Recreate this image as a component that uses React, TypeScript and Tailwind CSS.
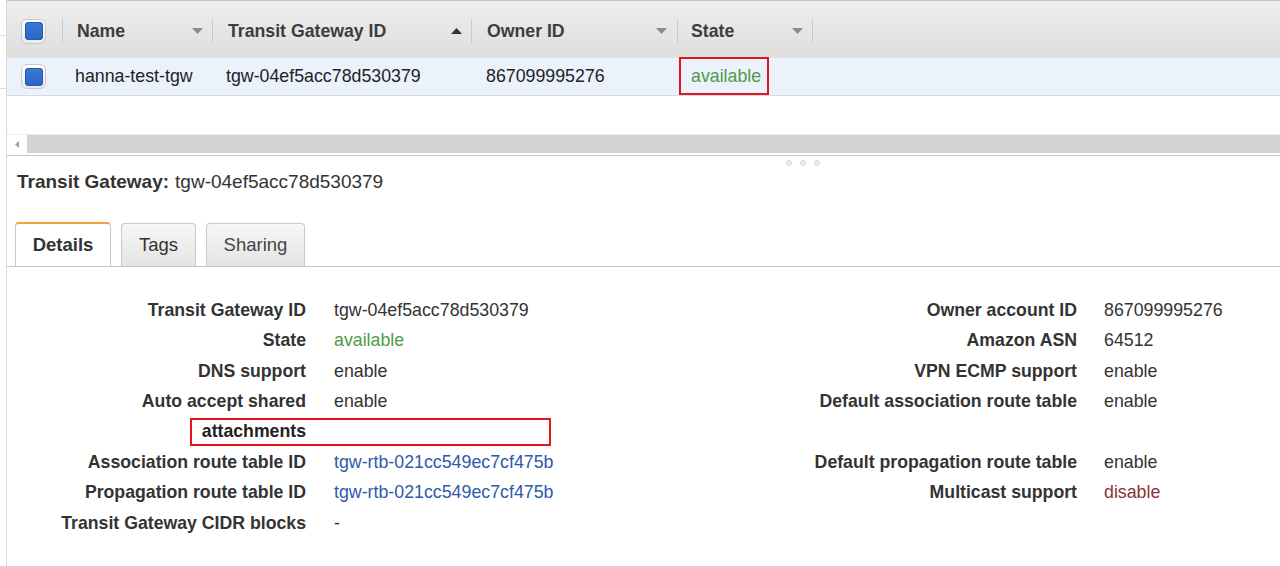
import React from 'react';

const DownArrow = () => (
  <svg width="11" height="6" viewBox="0 0 11 6" className="shrink-0">
    <path d="M0 0 L11 0 L5.5 6 Z" fill="#8c8c8c" />
  </svg>
);

const UpArrow = () => (
  <svg width="11" height="6" viewBox="0 0 11 6" className="shrink-0">
    <path d="M0 6 L11 6 L5.5 0 Z" fill="#333" />
  </svg>
);

function Checkbox() {
  return (
    <div className="w-[25px] h-[25px] rounded-[6px] border border-[#c9c9c9] bg-linear-to-b from-white to-[#ebebeb] flex items-center justify-center">
      <div className="w-[18px] h-[18px] rounded-[4px] bg-linear-to-b from-[#3a7ad8] to-[#2b63c3] shadow-[inset_0_0_0_1px_#2559b0]" />
    </div>
  );
}

const Sep = () => <div className="w-px h-[24px] bg-[#c9c9c9] shrink-0" />;

type Row = { label: string; value: string; tone?: 'green' | 'link' | 'red' } | null;

const leftRows: Row[] = [
  { label: 'Transit Gateway ID', value: 'tgw-04ef5acc78d530379' },
  { label: 'State', value: 'available', tone: 'green' },
  { label: 'DNS support', value: 'enable' },
  { label: 'Auto accept shared', value: 'enable' },
  null,
  { label: 'Association route table ID', value: 'tgw-rtb-021cc549ec7cf475b', tone: 'link' },
  { label: 'Propagation route table ID', value: 'tgw-rtb-021cc549ec7cf475b', tone: 'link' },
  { label: 'Transit Gateway CIDR blocks', value: '-' },
];

const rightRows: Row[] = [
  { label: 'Owner account ID', value: '867099995276' },
  { label: 'Amazon ASN', value: '64512' },
  { label: 'VPN ECMP support', value: 'enable' },
  { label: 'Default association route table', value: 'enable' },
  null,
  { label: 'Default propagation route table', value: 'enable' },
  { label: 'Multicast support', value: 'disable', tone: 'red' },
];

const toneClass = (tone?: string) =>
  tone === 'green' ? 'text-[#529b44]' : tone === 'link' ? 'text-[#2f59ab]' : tone === 'red' ? 'text-[#883333]' : 'text-[#333]';

export default function App() {
  return (
    <div className="w-[1280px] h-[566px] bg-white flex overflow-hidden font-['Liberation_Sans',Arial,sans-serif] text-[#333]">
      {/* left strip */}
      <div className="w-[6px] shrink-0 flex flex-col">
        <div className="h-[35px]" />
        <div className="h-px bg-[#dadada]" />
        <div className="h-[52px]" />
        <div className="h-px bg-[#dadada]" />
      </div>

      <div className="flex-1 border-l border-[#d9d9d9] flex flex-col">
        {/* table header */}
        <div className="h-px bg-[#c4c4c4]" />
        <div className="h-[57px] pt-[3px] flex items-center bg-linear-to-b from-[#eeeeee] to-[#dedede] text-[17.7px] font-bold text-[#3d3d3d]">
          <div className="w-[55px] pl-[14px] flex items-center">
            <Checkbox />
          </div>
          <Sep />
          <div className="w-[149px] pl-[14px] pr-[9px] flex items-center justify-between">
            <span>Name</span>
            <DownArrow />
          </div>
          <Sep />
          <div className="w-[258px] pl-[15px] pr-[9px] flex items-center justify-between">
            <span>Transit Gateway ID</span>
            <UpArrow />
          </div>
          <Sep />
          <div className="w-[205px] pl-[15px] pr-[10px] flex items-center justify-between">
            <span>Owner ID</span>
            <DownArrow />
          </div>
          <Sep />
          <div className="w-[134px] pl-[13px] pr-[9px] flex items-center justify-between">
            <span>State</span>
            <DownArrow />
          </div>
          <Sep />
        </div>

        {/* table row */}
        <div className="h-[38px] flex items-center bg-[#ebf2fc] border-b border-[#d2dbe7] text-[17.8px] text-[#222]">
          <div className="w-[56px] pl-[14px] flex items-center">
            <Checkbox />
          </div>
          <div className="w-[150px] pl-[12px]">hanna-test-tgw</div>
          <div className="w-[259px] pl-[13px]">tgw-04ef5acc78d530379</div>
          <div className="w-[206px] pl-[14px]">867099995276</div>
          <div className="pl-[1px] self-start -mt-px">
            <div className="w-[90px] h-[38px] border-2 border-[#e3141c] pl-[10px] flex items-center text-[#529b44]">
              available
            </div>
          </div>
        </div>

        <div className="h-[38px]" />

        {/* horizontal scrollbar */}
        <div className="h-px bg-[#eeeeee]" />
        <div className="h-[18px] flex">
          <div className="w-[20px] flex items-center pl-[8px]">
            <svg width="4" height="7" viewBox="0 0 4 7">
              <path d="M4 0 L4 7 L0 3.5 Z" fill="#a0a0a0" />
            </svg>
          </div>
          <div className="flex-1 bg-[#d3d3d3]" />
        </div>
        <div className="h-[2px]" />
        <div className="h-px bg-[#c8c8c8]" />

        {/* splitter dots */}
        <div className="h-[14px] flex items-center pl-[779px] gap-[8px]">
          {[0, 1, 2].map((i) => (
            <div key={i} className="w-[6px] h-[6px] rounded-full bg-[#ececec] border border-[#d8d8d8]" />
          ))}
        </div>

        {/* title */}
        <div className="h-[24px] flex items-center pl-[10px] text-[19px] text-[#333]">
          <span className="font-bold">Transit Gateway:</span>
          <span className="ml-[6px]">tgw-04ef5acc78d530379</span>
        </div>

        {/* tabs */}
        <div className="mt-[28px] h-[45px] flex items-end pl-[8px] border-b border-[#c6c6c6] text-[18.5px]">
          <div className="w-[96px] h-[44px] rounded-t-[4px] border-x border-[#c9c9c9] border-t-2 border-t-[#f2a23f] bg-white flex items-center justify-center font-bold text-[#333]">
            Details
          </div>
          <div className="ml-[10px] w-[75px] h-[43px] rounded-t-[4px] border-x border-t border-[#c9c9c9] bg-linear-to-b from-[#f7f7f7] to-[#e4e4e4] flex items-center justify-center text-[#333]">
            Tags
          </div>
          <div className="ml-[10px] w-[99px] h-[43px] rounded-t-[4px] border-x border-t border-[#c9c9c9] bg-linear-to-b from-[#f7f7f7] to-[#e4e4e4] flex items-center justify-center text-[#444]">
            Sharing
          </div>
        </div>

        {/* details */}
        <div className="pt-[28px] flex">
          <div className="w-[700px] flex flex-col">
            {leftRows.map((r, i) =>
              r ? (
                <div key={i} className="h-[30.4px] flex items-center">
                  <div className="w-[299px] text-right font-bold text-[17.7px] text-[#333]">{r.label}</div>
                  <div className={`pl-[28px] text-[17.8px] ${toneClass(r.tone)}`}>{r.value}</div>
                </div>
              ) : (
                <div key={i} className="h-[30.4px] flex items-center">
                  <div className="ml-[183px] w-[361px] h-[28px] border-2 border-[#e3141c] flex items-center">
                    <div className="w-[114px] text-right font-bold text-[17.7px] text-[#222]">attachments</div>
                  </div>
                </div>
              )
            )}
          </div>
          <div className="flex-1 flex flex-col">
            {rightRows.map((r, i) =>
              r ? (
                <div key={i} className="h-[30.4px] flex items-center">
                  <div className="w-[370px] text-right font-bold text-[17.7px] text-[#333]">{r.label}</div>
                  <div className={`pl-[27px] text-[17.8px] ${toneClass(r.tone)}`}>{r.value}</div>
                </div>
              ) : (
                <div key={i} className="h-[30.4px]" />
              )
            )}
          </div>
        </div>
      </div>
    </div>
  );
}
